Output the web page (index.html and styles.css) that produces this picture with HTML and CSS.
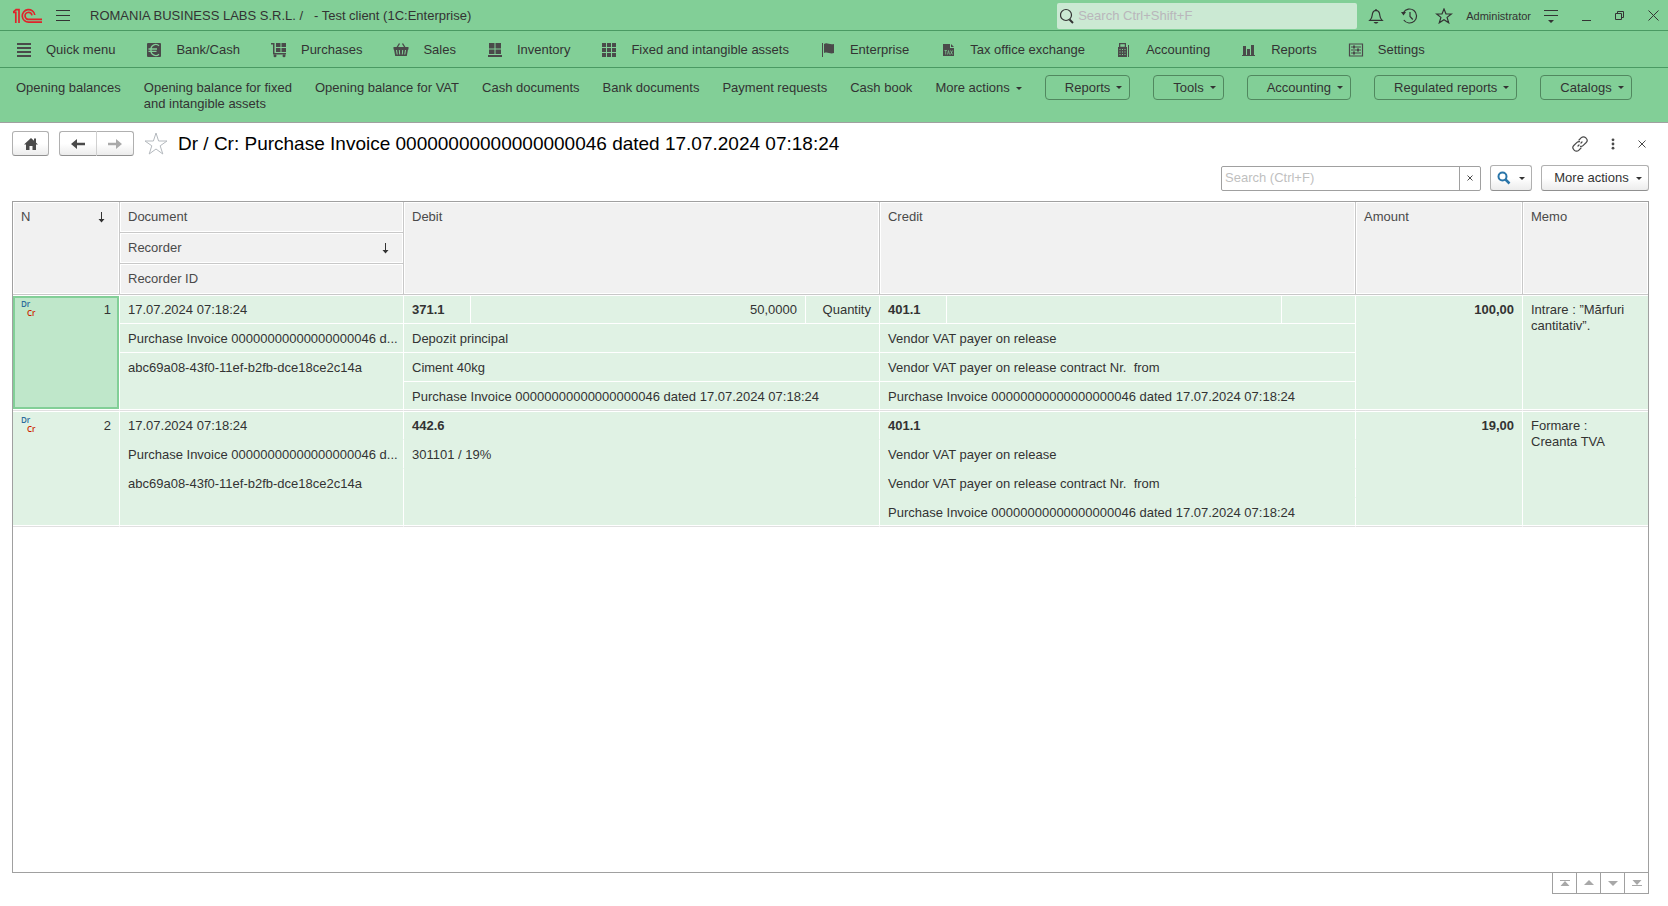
FILE: index.html
```html
<!DOCTYPE html>
<html lang="en">
<head>
<meta charset="utf-8">
<title>Dr / Cr: Purchase Invoice</title>
<link rel="stylesheet" href="styles.css">
</head>
<body>
<header class="top">
  <div class="titlebar">
    <svg class="logo" width="30" height="16" viewBox="0 0 30 16" fill="none" stroke="#e0232b" stroke-width="1.700"><path d="M0 4.300H2.800V15M2.500 1.600H6V15M29 14.200H16A6.300 6.300 0 1 1 21.800 7M29 11.400H16A3.500 3.500 0 1 1 19 7.300"/><path d="M0 4.300L3 1.600"/></svg>
    <button class="plain burger" aria-label="Main menu"><svg width="14" height="12" viewBox="0 0 14 12" fill="#333"><path d="M0 0h14v1H0zM0 5h14v1H0zM0 10h14v1H0z"/></svg></button>
    <span class="app-title">ROMANIA BUSINESS LABS S.R.L. /&nbsp;&nbsp; - Test client (1C:Enterprise)</span>
    <label class="global-search"><svg width="14" height="16" viewBox="0 0 14 16" fill="none" stroke="#333"><circle cx="6" cy="7" r="5.500" stroke-width="1.200"/><path d="M9.500 11.500L13 15" stroke-width="2"/></svg><input type="text" aria-label="Search" placeholder="Search Ctrl+Shift+F"></label>
    <div class="tools">
      <button class="plain" aria-label="Notifications"><svg width="16" height="16" viewBox="0 0 16 16" fill="none" stroke="#333" stroke-width="1.200"><path d="M1.800 12.400h12.400c-2-1.800-2.200-3-2.400-5.200C11.600 4.600 10.500 2.600 8 2.400 5.500 2.600 4.400 4.600 4.200 7.200 4 9.400 3.800 10.600 1.800 12.400z"/><path d="M8 1v1.400"/><path d="M5.500 14h5l-1.500 1.500h-2z" fill="#333" stroke="none"/></svg></button>
      <button class="plain" aria-label="History"><svg width="17" height="16" viewBox="0 0 17 16" fill="none" stroke="#333" stroke-width="1.200"><path d="M2.500 4.500A7 7 0 1 1 2.800 12"/><path d="M9 4v4.500l2.800 3"/><path d="M0 4h5L2.500 7.500z" fill="#333" stroke="none"/></svg></button>
      <button class="plain" aria-label="Favorites"><svg width="18" height="16" viewBox="0 0 18 16" fill="none" stroke="#333" stroke-width="1.200"><path d="M9 1l2 5h5.300l-4.200 3.400 1.600 5.400L9 11.700l-4.700 3.100 1.600-5.400L1.700 6H7z"/></svg></button>
      <button class="plain user">Administrator</button>
      <button class="plain" aria-label="Service menu"><svg width="14" height="14" viewBox="0 0 14 14" fill="#333"><path d="M0 1h14v1H0zM0 6h14v1H0zM4 11h6l-3 3z"/></svg></button>
    </div>
    <div class="window-tools">
      <button class="plain" aria-label="Minimize"><svg width="10" height="12" viewBox="0 0 10 12" fill="#333"><path d="M0 10h9v1H0z"/></svg></button>
      <button class="plain" aria-label="Restore"><svg width="10" height="10" viewBox="0 0 10 10" fill="none" stroke="#333"><path d="M.5 2.500h6v6h-6zM2.500 2.500v-2h6v6h-2"/></svg></button>
      <button class="plain" aria-label="Close"><svg width="11" height="11" viewBox="0 0 11 11" fill="none" stroke="#333"><path d="M.5.5l10 10M10.500.5l-10 10"/></svg></button>
    </div>
  </div>

  <nav class="sections" aria-label="Sections">
    <a href="#"><svg viewBox="0 0 16 16"><path d="M1 1h14v2H1zM1 5h14v2H1zM1 9h14v2H1zM1 13h14v2H1z"/></svg>Quick menu</a>
    <a href="#"><svg viewBox="0 0 16 16"><rect x="1" y="1" width="14" height="14" rx="1"/><path d="M13 3.800A4.800 4.800 0 0 0 5 8A4.800 4.800 0 0 0 13 12.200M2.500 7h8.500M2.500 9.300h8" fill="none" stroke="#82cf97" stroke-width="1.300"/></svg>Bank/Cash</a>
    <a href="#"><svg viewBox="0 0 16 16"><path d="M0 1h3.500v10H15v1.500H2V2.500H0zM5 1h4.500v4H5zM10.500 1H15v4h-4.500zM5 6h4.500v4H5zM10.500 6H15v4h-4.500z"/><circle cx="4" cy="13.700" r="1.500"/><circle cx="13" cy="13.700" r="1.500"/></svg>Purchases</a>
    <a href="#"><svg viewBox="0 0 16 16"><path d="M.5 5h15v2.500H15L13.800 14H2.200L1 7.500H.5z"/><path d="M4 5.500L6.500 1.500M12 5.500L9.500 1.500" fill="none" stroke="#4a4a4a" stroke-width="1.400"/><path d="M3.500 8l.7 4.500M6.300 8l.4 4.500M9.700 8l-.4 4.500M12.500 8l-.7 4.500" stroke="#82cf97"/></svg>Sales</a>
    <a href="#"><svg viewBox="0 0 16 16"><path d="M2 1h5.500v5.500H2zM8.500 1H14v5.500H8.500zM2 7.500h5.500v4.500H2zM8.500 7.500H14v4.500H8.500zM1 13h14v2H1z"/></svg>Inventory</a>
    <a href="#"><svg viewBox="0 0 16 16"><path d="M1 1h4v4H1zM6 1h4v4H6zM11 1h4v4h-4zM1 6h4v4H1zM6 6h4v4H6zM11 6h4v4h-4zM1 11h4v4H1zM6 11h4v4H6zM11 11h4v4h-4z"/></svg>Fixed and intangible assets</a>
    <a href="#"><svg viewBox="0 0 16 16"><path d="M2 1h1v14H2zM4 2c3-2 5 1 10 0v9c-4 1.500-6-1.500-10 0z"/></svg>Enterprise</a>
    <a href="#"><svg viewBox="0 0 16 16"><path d="M3 2h7v4h4v8H3z"/><path d="M11 2l3 3h-3z"/><path d="M4.500 8.500h2.500M5.700 8.500v4M7.500 12.500l1-4 1 4M10.500 8.500l2 4M12.500 8.500l-2 4" fill="none" stroke="#82cf97" stroke-width=".7"/></svg>Tax office exchange</a>
    <a href="#"><svg viewBox="0 0 16 16"><path d="M3 1h7v4h1v10H2V5h1zM12 3h1v12h-1z"/><path d="M4.300 2.300h4.500v2.500H4.300zM3.500 7h1v1h-1zM6 7h1v1H6zM8.500 7h1v1h-1zM3.500 9.500h1v1h-1zM6 9.500h1v1H6zM8.500 9.500h1v1h-1zM3.500 12h1v1h-1zM6 12h1v1H6zM8.500 12h1v1h-1z" fill="#82cf97"/></svg>Accounting</a>
    <a href="#"><svg viewBox="0 0 16 16"><path d="M1 13h13v1H1zM2 4h3v9H2zM6 7h3v6H6zM10 3h3v10h-3z"/></svg>Reports</a>
    <a href="#"><svg viewBox="0 0 16 16"><path d="M1.500 2h13v12h-13z" fill="none" stroke="#4a4a4a" stroke-width="1.200"/><path d="M3 4.500h10v1H3zM3 7.500h10v1H3zM3 10.500h10v1H3zM5 3.500h2v3H5zM9 6.500h2v3H9zM5 9.500h2v3H5z"/></svg>Settings</a>
  </nav>

  <nav class="commands" aria-label="Commands">
    <a href="#">Opening balances</a>
    <a href="#">Opening balance for fixed<br>and intangible assets</a>
    <a href="#">Opening balance for VAT</a>
    <a href="#">Cash documents</a>
    <a href="#">Bank documents</a>
    <a href="#">Payment requests</a>
    <a href="#">Cash book</a>
    <button class="plain more">More actions<i class="caret"></i></button>
    <button class="group">Reports<i class="caret"></i></button>
    <button class="group">Tools<i class="caret"></i></button>
    <button class="group">Accounting<i class="caret"></i></button>
    <button class="group">Regulated reports<i class="caret"></i></button>
    <button class="group">Catalogs<i class="caret"></i></button>
  </nav>
</header>

<main class="page">
  <div class="page-head">
    <button class="btn home" aria-label="Home"><svg width="16" height="14" viewBox="0 0 16 14" fill="#4a4a4a"><path d="M8 1l7 6.500h-2V13H9.500V9h-3v4H3V7.500H1z"/><path d="M11 1.500h2V6h-2z"/></svg></button>
    <div class="history">
      <button class="btn" aria-label="Back"><svg width="16" height="12" viewBox="0 0 16 12" fill="#4a4a4a"><path d="M1 6l6-5v3.800h8v2.400H7V11z"/></svg></button>
      <button class="btn" aria-label="Forward" disabled><svg width="16" height="12" viewBox="0 0 16 12" fill="#aaa"><path d="M15 6L9 1v3.800H1v2.400h8V11z"/></svg></button>
    </div>
    <button class="plain fav" aria-label="Add to favorites"><svg width="24" height="24" viewBox="0 0 24 24" fill="none" stroke="#b4b9be"><path d="M12 1l2.600 8H23l-6.800 4.800 2.600 8.200L12 17l-6.800 5 2.600-8.200L1 9h8.400z"/></svg></button>
    <h1>Dr / Cr: Purchase Invoice 00000000000000000046 dated 17.07.2024 07:18:24</h1>
    <div class="page-tools">
      <button class="plain" aria-label="Get link"><svg width="16" height="16" viewBox="0 0 16 16" fill="none" stroke="#4a4a4a" stroke-width="1.200" stroke-linecap="round"><path d="M7 4l2.300-2.300a3 3 0 0 1 4.300 0l.6.600a3 3 0 0 1 0 4.200L11 9.600a3 3 0 0 1-2.500.8M9 12l-2.300 2.300a3 3 0 0 1-4.300 0l-.6-.6a3 3 0 0 1 0-4.200L5 6.400a3 3 0 0 1 2.500-.8M6 10l1-1M9 7l1-1"/></svg></button>
      <button class="plain" aria-label="More"><svg width="4" height="12" viewBox="0 0 4 12" fill="#4a4a4a"><circle cx="2" cy="1.800" r="1.400"/><circle cx="2" cy="6" r="1.400"/><circle cx="2" cy="10.200" r="1.400"/></svg></button>
      <button class="plain" aria-label="Close form"><svg width="8" height="8" viewBox="0 0 8 8" stroke="#4a4a4a"><path d="M.5.5l7 7M7.500.5l-7 7"/></svg></button>
    </div>
  </div>

  <div class="list-bar">
    <div class="list-search"><input type="text" aria-label="Search in list" placeholder="Search (Ctrl+F)"><button aria-label="Clear"><svg width="6" height="6" viewBox="0 0 6 6" stroke="#4a4a4a"><path d="M.5.5l5 5M5.500.5l-5 5"/></svg></button></div>
    <button class="btn find" aria-label="Find"><svg width="14" height="14" viewBox="0 0 14 14" fill="none" stroke="#2a75a9" stroke-width="2"><circle cx="5.500" cy="5.500" r="4"/><path d="M8.500 8.500L12.500 12.500" stroke-width="2.500"/></svg><i class="caret"></i></button>
    <button class="btn actions">More actions<i class="caret"></i></button>
  </div>

  <div class="list">
    <table>
      <colgroup><col class="c-n"><col class="c-doc"><col class="c-acc"><col><col class="c-qty"><col class="c-acc"><col><col class="c-qty"><col class="c-sum"><col class="c-memo"></colgroup>
      <thead>
        <tr><th rowspan="3"><div class="sort">N<svg width="7" height="11" viewBox="0 0 7 11" fill="#333"><path d="M3 0h1v7h2.500L3.500 10.500.5 7H3z"/></svg></div></th><th>Document</th><th colspan="3" rowspan="3">Debit</th><th colspan="3" rowspan="3">Credit</th><th rowspan="3">Amount</th><th rowspan="3">Memo</th></tr>
        <tr><th><div class="sort">Recorder<svg width="7" height="11" viewBox="0 0 7 11" fill="#333"><path d="M3 0h1v7h2.500L3.500 10.500.5 7H3z"/></svg></div></th></tr>
        <tr><th>Recorder ID</th></tr>
      </thead>
      <tbody>
        <tr class="first"><td rowspan="4" class="end mark selected"><div class="num"><span class="drcr"><span class="dr">Dr</span><span class="cr">Cr</span></span><span class="n">1</span></div></td><td>17.07.2024 07:18:24</td><td class="bold">371.1</td><td class="right">50,0000</td><td class="right">Quantity</td><td class="bold">401.1</td><td></td><td></td><td rowspan="4" class="end right bold">100,00</td><td rowspan="4" class="end last">Intrare : ”Mărfuri cantitativ”.</td></tr>
        <tr><td class="tight">Purchase Invoice 00000000000000000046 d...</td><td colspan="3">Depozit principal</td><td colspan="3">Vendor VAT payer on release</td></tr>
        <tr><td rowspan="2" class="end">abc69a08-43f0-11ef-b2fb-dce18ce2c14a</td><td colspan="3">Ciment 40kg</td><td colspan="3">Vendor VAT payer on release contract Nr.&nbsp; from</td></tr>
        <tr><td colspan="3" class="end">Purchase Invoice 00000000000000000046 dated 17.07.2024 07:18:24</td><td colspan="3" class="end">Purchase Invoice 00000000000000000046 dated 17.07.2024 07:18:24</td></tr>
      </tbody>
      <tbody class="merged">
        <tr class="first"><td rowspan="4" class="end mark"><div class="num"><span class="drcr"><span class="dr">Dr</span><span class="cr">Cr</span></span><span class="n">2</span></div></td><td>17.07.2024 07:18:24</td><td colspan="3" class="bold">442.6</td><td colspan="3" class="bold">401.1</td><td rowspan="4" class="end right bold">19,00</td><td rowspan="4" class="end last">Formare :<br>Creanta TVA</td></tr>
        <tr><td class="tight">Purchase Invoice 00000000000000000046 d...</td><td colspan="3" rowspan="3" class="end">301101 / 19%</td><td colspan="3">Vendor VAT payer on release</td></tr>
        <tr><td rowspan="2" class="end">abc69a08-43f0-11ef-b2fb-dce18ce2c14a</td><td colspan="3">Vendor VAT payer on release contract Nr.&nbsp; from</td></tr>
        <tr><td colspan="3" class="end">Purchase Invoice 00000000000000000046 dated 17.07.2024 07:18:24</td></tr>
      </tbody>
    </table>
  </div>
  <div class="pager">
    <button aria-label="First"><svg width="10" height="6" viewBox="0 0 10 6"><path d="M0 0h10v1H0zM5 1l4.500 5h-9z"/></svg></button>
    <button aria-label="Previous"><svg width="10" height="6" viewBox="0 0 10 6"><path d="M5 0l5 5H0z"/></svg></button>
    <button aria-label="Next"><svg width="10" height="6" viewBox="0 0 10 6"><path d="M5 6L0 1h10z"/></svg></button>
    <button aria-label="Last"><svg width="10" height="6" viewBox="0 0 10 6"><path d="M0 5h10v1H0zM5 5L.5 0h9z"/></svg></button>
  </div>
</main>
</body>
</html>
```
FILE: styles.css
```css
* { box-sizing: border-box; }
html, body { height: 100%; }
body {
  margin: 0;
  display: flex;
  flex-direction: column;
  background: #fff;
  color: #333;
  font: 13px/16px "Liberation Sans", Arial, sans-serif;
}
button, input { font: inherit; color: inherit; }
svg { display: block; flex: none; }
a { color: inherit; text-decoration: none; }
.plain { display: flex; align-items: center; padding: 0; border: 0; background: none; }
.caret {
  flex: none;
  border: 3px solid transparent;
  border-top-color: currentColor;
  border-bottom: 0;
}

.top { background: #82cf97; border-bottom: 1px solid #a0a0a0; }
.titlebar {
  display: flex;
  align-items: center;
  height: 31px;
  padding: 1px 9px 0 13px;
  border-bottom: 1px solid #4a9a63;
}
.burger { margin: 0 20px 0 13px; }
.global-search {
  display: flex;
  align-items: center;
  gap: 4px;
  width: 300px;
  height: 26px;
  margin-left: auto;
  padding-left: 3px;
  border-radius: 2px;
  background: #cbe9d3;
}
.global-search input { flex: 1; min-width: 0; padding: 0; border: 0; outline: 0; background: none; }
.global-search input::placeholder { color: #b9b6bb; opacity: 1; }
.tools { display: flex; align-items: center; gap: 17px; margin-left: 11px; }
.user { margin-left: -4px; margin-right: -4px; font-size: 11px; }
.window-tools { display: flex; align-items: center; gap: 23px; margin-left: 24px; }

.sections {
  display: flex;
  align-items: center;
  gap: 31px;
  height: 37px;
  padding: 1px 0 0 16px;
  border-bottom: 1px solid #4a9a63;
  white-space: nowrap;
}
.sections a { display: flex; align-items: center; gap: 14px; }
.sections svg { width: 16px; height: 16px; fill: #4a4a4a; }

.commands {
  display: flex;
  align-items: flex-start;
  gap: 23px;
  height: 54px;
  padding: 7px 16px 0;
  white-space: nowrap;
}
.commands a, .commands .more { padding-top: 5px; }
.more { gap: 6px; }
.group {
  display: flex;
  align-items: center;
  gap: 6px;
  height: 25px;
  padding: 0 7px 0 19px;
  border: 1px solid #51885f;
  border-radius: 4px;
  background: none;
}

.page { flex: 1; display: flex; flex-direction: column; padding: 8px 19px 12px 12px; min-height: 0; }
.page-head { display: flex; align-items: center; height: 25px; }
.btn {
  display: flex;
  align-items: center;
  justify-content: center;
  height: 25px;
  padding: 0;
  border: 1px solid #b0b0b0;
  border-bottom-color: #909090;
  border-radius: 3px;
  background: linear-gradient(#fff 50%, #ececec);
}
.home { width: 37px; margin-right: 10px; }
.history { display: flex; }
.history .btn { width: 37px; }
.history .btn:first-child { width: 38px; border-radius: 3px 0 0 3px; border-right-color: #d0d0d0; }
.history .btn:last-child { border-left: 0; border-radius: 0 3px 3px 0; }
.fav { margin: 0 10px; }
h1 { margin: 0; color: #000; font-size: 19px; font-weight: 400; line-height: 24px; white-space: nowrap; }
.page-tools { display: flex; align-items: center; gap: 23px; margin: 0 3px 0 auto; }

.list-bar { display: flex; align-items: center; justify-content: flex-end; height: 26px; margin: 9px 0 10px; gap: 9px; }
.list-search { display: flex; width: 260px; height: 25px; border: 1px solid #a0a0a0; border-radius: 2px; }
.list-search input { flex: 1; min-width: 0; padding: 0 3px; border: 0; outline: 0; background: none; }
.list-search input::placeholder { color: #bfbfbf; opacity: 1; }
.list-search button { display: flex; align-items: center; justify-content: center; width: 21px; padding: 0; border: 0; border-left: 1px solid #a0a0a0; background: none; }
.find { width: 42px; height: 26px; gap: 8px; }
.actions { width: 108px; height: 26px; gap: 7px; padding-left: 6px; }

.list { flex: 1; min-height: 0; border: 1px solid #a0a0a0; overflow: hidden; }
table { width: 100%; table-layout: fixed; border-collapse: separate; border-spacing: 0; }
.c-n { width: 107px; }
.c-doc { width: 284px; }
.c-acc { width: 67px; }
.c-qty { width: 74px; }
.c-sum { width: 167px; }
.c-memo { width: 125px; }
th {
  height: 31px;
  padding: 7px 8px;
  border-right: 1px solid #c8c8c8;
  border-bottom: 1px solid #c8c8c8;
  background: #f1f1f1;
  box-shadow: inset 0 0 0 1px #fff;
  color: #4a4a4a;
  font-weight: 400;
  text-align: left;
  vertical-align: top;
}
th:last-child[rowspan] { border-right: 0; }
.sort { display: flex; justify-content: space-between; align-items: center; padding-right: 6px; }
td {
  height: 29px;
  padding: 7px 8px 5px;
  border-right: 1px solid #fff;
  border-bottom: 1px solid #fff;
  background: #e0f2e4;
  vertical-align: top;
}
.first td { padding-top: 6px; border-top: 1px solid #fff; }
td.end { border-bottom-color: #e0e0e0; box-shadow: inset 0 -1px #fff; }
td.last { border-right: 0; }
td.tight { padding-right: 0; white-space: nowrap; }
.merged td:not(.end) { border-bottom-color: #e0f2e4; }
.right { text-align: right; }
.bold { font-weight: 700; }
td.selected { background: #bfe7ca; box-shadow: inset 0 -1px #fff, inset 0 0 0 2px #82cf97, inset 0 -3px #82cf97; }
.first td.mark { padding-top: 3px; }
.num { display: flex; justify-content: space-between; }
.n { padding-top: 3px; }
.drcr { display: flex; flex-direction: column; font: 600 8px/9px "Open Sans", sans-serif; }
.dr { color: #2b6a9b; }
.cr { padding-left: 6px; color: #cc1f00; }

.pager { display: flex; align-self: flex-end; margin-top: -1px; border: 1px solid #a0a0a0; }
.pager button { display: flex; align-items: center; justify-content: center; width: 24px; height: 20px; padding: 0; border: 0; border-right: 1px solid #a0a0a0; background: #fff; }
.pager button:last-child { width: 23px; border-right: 0; }
.pager svg { fill: #a8a8a8; }
```
